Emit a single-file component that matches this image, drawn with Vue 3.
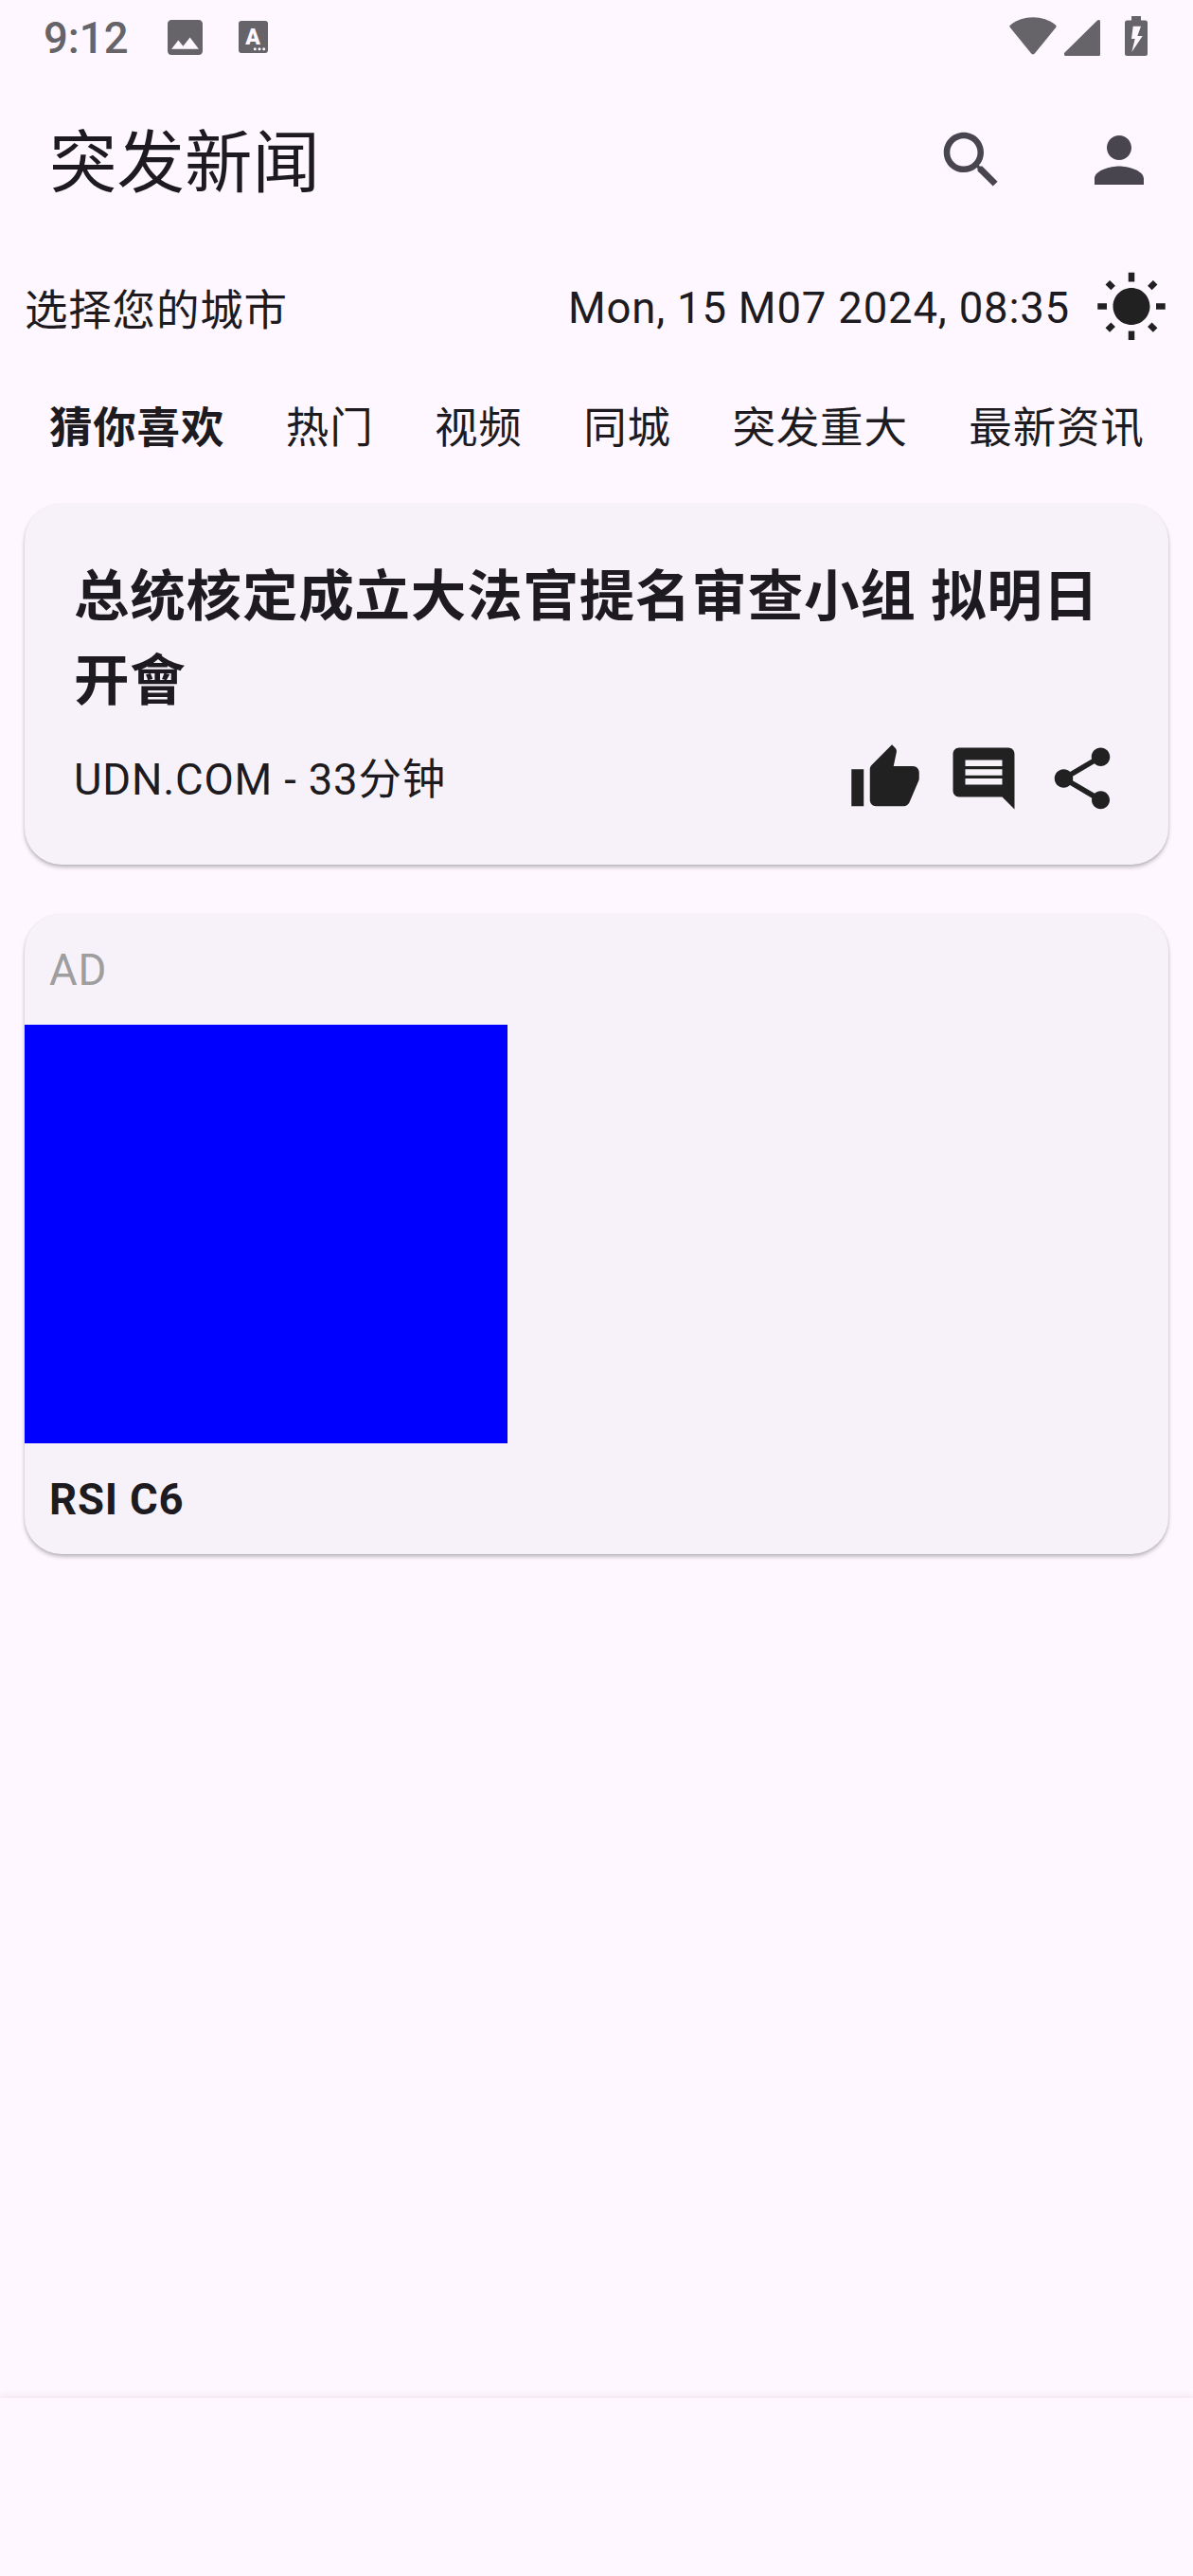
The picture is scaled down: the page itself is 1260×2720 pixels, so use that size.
<script setup>
const tabs = ['猜你喜欢', '热门', '视频', '同城', '突发重大', '最新资讯']
</script>

<template>
  <div class="screen">
    <header class="status">
      <span class="clock">9:12</span>
      <svg class="st-image" viewBox="0 0 18 18"><path d="M18 16V2c0-1.100-.9-2-2-2H2C.9 0 0 .9 0 2v14c0 1.100.9 2 2 2h14c1.100 0 2-.9 2-2zM5.500 10.500l2.500 3.010L11.500 9l4.500 6H2l3.500-4.500z" /></svg>
      <svg class="st-lang" viewBox="0 0 31 34">
        <rect width="31" height="34" rx="3" />
        <text x="15" y="24.500" text-anchor="middle">A</text>
        <g class="dots"><circle cx="17.300" cy="29.800" r="1.500" /><circle cx="22" cy="29.800" r="1.500" /><circle cx="26.700" cy="29.800" r="1.500" /></g>
      </svg>
      <svg class="st-wifi" viewBox="0 0 50 41"><path d="M1 8.500C8 3 16 .3 25 .3S42 3 49 8.500q1.200 1.200.2 2.500L26.800 38.500q-1.800 1.700-3.600 0L.8 11Q-.2 9.700 1 8.500z" /></svg>
      <svg class="st-signal" viewBox="0 0 38 38"><path d="M38 1.500V36.500Q38 38 36.500 38H1.500Q0 38 0 36.500V35L35 .6Q37.500-.8 38 1.500z" /></svg>
      <svg class="st-battery" viewBox="0 0 24 42"><path fill-rule="evenodd" d="M7 0h10v4.500h4.500Q24 4.500 24 7v32.500Q24 42 21.500 42h-19Q0 42 0 39.500V7Q0 4.500 2.500 4.500H7zM8.700 10.700L7 24h3.700L7.300 38 18.700 21h-5.400L17 10.700z" /></svg>
    </header>

    <div class="appbar">
      <h1>突发新闻</h1>
      <button aria-label="搜索"><svg viewBox="0 0 24 24"><path d="M15.500 14h-.79l-.28-.27C15.410 12.590 16 11.110 16 9.500 16 5.910 13.090 3 9.500 3S3 5.910 3 9.500 5.910 16 9.500 16c1.610 0 3.090-.59 4.230-1.570l.27.28v.79l5 4.990L20.490 19l-4.990-5zm-6 0C7.010 14 5 11.990 5 9.500S7.010 5 9.500 5 14 7.010 14 9.500 11.990 14 9.500 14z" /></svg></button>
      <button aria-label="我的"><svg viewBox="0 0 24 24"><path d="M12 12c2.210 0 4-1.790 4-4s-1.790-4-4-4-4 1.790-4 4 1.790 4 4 4zm0 2c-2.670 0-8 1.340-8 4v2h16v-2c0-2.660-5.330-4-8-4z" /></svg></button>
    </div>

    <div class="info">
      <span class="city">选择您的城市</span>
      <time>Mon, 15 M07 2024, 08:35</time>
      <svg class="icon" viewBox="0 0 24 24"><path d="M6.760 4.840l-1.800-1.790-1.410 1.410 1.790 1.790 1.420-1.410zM4 10.500H1v2h3v-2zm9-9.950h-2V3.500h2V.55zm7.450 3.910l-1.410-1.410-1.790 1.790 1.410 1.410 1.790-1.790zm-3.210 13.700l1.790 1.800 1.410-1.410-1.800-1.790-1.400 1.400zM20 10.500v2h3v-2h-3zm-8-5c-3.310 0-6 2.690-6 6s2.690 6 6 6 6-2.690 6-6-2.690-6-6-6zm-1 16.950h2V19.500h-2v2.950zm-7.450-3.910l1.410 1.410 1.790-1.800-1.410-1.410-1.790 1.800z" /></svg>
    </div>

    <nav class="tabs">
      <span v-for="(tab, i) in tabs" :key="tab" :class="{ active: i === 0 }">{{ tab }}</span>
    </nav>

    <main>
      <article class="card news">
        <h2>总统核定成立大法官提名审查小组 拟明日开會</h2>
        <div class="meta">
          <span class="source">UDN.COM - 33分钟</span>
          <svg class="icon" viewBox="0 0 24 24"><path d="M1 21h4V9H1v12zm22-11c0-1.100-.9-2-2-2h-6.310l.95-4.570.03-.32c0-.41-.17-.79-.44-1.060L14.170 1 7.590 7.590C7.220 7.950 7 8.450 7 9v10c0 1.100.9 2 2 2h9c.83 0 1.540-.5 1.840-1.220l3.020-7.050c.09-.23.14-.47.14-.73v-2z" /></svg>
          <svg class="icon" viewBox="0 0 24 24"><path d="M21.990 4c0-1.100-.89-2-1.990-2H4c-1.100 0-2 .9-2 2v12c0 1.100.9 2 2 2h14l4 4-.01-18zM18 14H6v-2h12v2zm0-3H6V9h12v2zm0-3H6V6h12v2z" /></svg>
          <svg class="icon" viewBox="0 0 24 24"><path d="M18 16.080c-.76 0-1.440.3-1.960.77L8.910 12.700c.05-.23.09-.46.09-.7s-.04-.47-.09-.7l7.050-4.110c.54.5 1.250.81 2.040.81 1.660 0 3-1.340 3-3s-1.340-3-3-3-3 1.340-3 3c0 .24.04.47.09.7L8.040 9.810C7.500 9.310 6.790 9 6 9c-1.660 0-3 1.340-3 3s1.340 3 3 3c.79 0 1.500-.31 2.040-.81l7.120 4.160c-.05.21-.08.43-.08.65 0 1.610 1.310 2.920 2.920 2.920s2.920-1.310 2.920-2.920-1.310-2.920-2.920-2.920z" /></svg>
        </div>
      </article>

      <article class="card ad">
        <div class="ad-label">AD</div>
        <div class="ad-image"></div>
        <div class="ad-title">RSI C6</div>
      </article>
    </main>

    <footer class="bottom"></footer>
  </div>
</template>

<style>
html, body { margin: 0; background: #fef7ff; }
</style>

<style scoped>
.screen {
  width: 1260px;
  height: 2720px;
  display: flex;
  flex-direction: column;
  overflow: hidden;
  background: #fef7ff;
  color: #1d1b20;
  font: 400 45.5px/65px Roboto, "Noto Sans CJK SC", sans-serif;
  letter-spacing: 0.81px;
}
svg { display: block; flex: none; fill: currentColor; }
.status {
  height: 78px;
  flex: none;
  display: flex;
  align-items: flex-start;
  box-sizing: border-box;
  padding: 0 48px 0 46px;
  color: #666468;
}
.clock {
  width: 131px;
  padding-top: 14px;
  font-size: 45.5px;
  line-height: 54px;
  font-weight: 500;
  letter-spacing: 0;
}
.st-image { width: 37px; height: 37px; margin-top: 21px; }
.st-lang { width: 31px; height: 34px; margin: 22px 0 0 38px; }
.st-lang text { font: 900 23px Roboto, sans-serif; letter-spacing: 0; fill: #fef7ff; }
.st-lang .dots { fill: #fef7ff; }
.st-wifi { width: 50px; height: 41px; margin: 18px 0 0 auto; }
.st-signal { width: 38px; height: 38px; margin: 21px 0 0 8px; }
.st-battery { width: 24px; height: 42px; margin: 17px 0 0 26px; }

.appbar {
  height: 182px;
  flex: none;
  display: flex;
  align-items: center;
  padding-left: 52px;
}
h1 {
  flex: 1;
  margin: 0;
  padding-top: 7px;
  font-size: 71.5px;
  line-height: 91px;
  font-weight: 400;
  letter-spacing: 0;
}
button {
  width: 156px;
  height: 156px;
  padding: 39px;
  border: 0;
  background: none;
  color: #49454f;
}
button svg, .icon { width: 78px; height: 78px; }
.icon { color: #212121; }

.info {
  height: 130px;
  flex: none;
  display: flex;
  align-items: center;
  padding: 0 26px;
}
.city { flex: 1; padding-top: 6px; }
.info time { margin-right: 26px; }

.tabs {
  height: 125px;
  flex: none;
  display: flex;
  align-items: center;
  gap: 64.6px;
  padding: 0 52px;
  margin-bottom: 17px;
  white-space: nowrap;
}
.tabs .active { font-weight: 700; }

main { flex: 1; padding: 0 26px; }
.card {
  border-radius: 39px;
  background: #f7f2fa;
  box-shadow: 0 3px 4px rgba(0, 0, 0, 0.22), 0 1px 3px rgba(0, 0, 0, 0.1);
}
.news { box-sizing: border-box; padding: 54px 52px 52px; height: 381px; margin-bottom: 52px; }
h2 {
  margin: 0 0 20px;
  font-size: 58.5px;
  line-height: 88.5px;
  font-weight: 700;
}
.meta { display: flex; align-items: center; gap: 26px; }
.source { flex: 1; padding-top: 3px; }
.ad { height: 676px; }
.ad-label { padding: 27px 26px 25px; color: #9e9e9e; }
.ad-image { width: 510px; height: 442px; background: #00f; }
.ad-title { padding: 27px 26px 25px; font-weight: 700; }
.bottom {
  height: 188px;
  flex: none;
  background: #fef7ff;
  box-shadow: 0 -2px 7px rgba(60, 40, 60, 0.08);
}
</style>
